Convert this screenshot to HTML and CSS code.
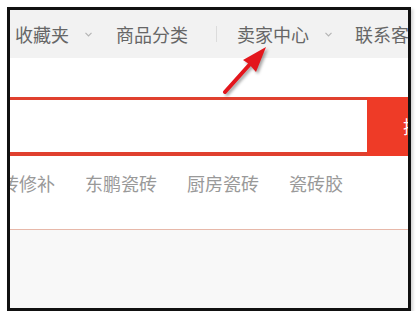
FILE: index.html
```html
<!DOCTYPE html>
<html lang="zh-CN">
<head>
  <meta charset="UTF-8" />
  <meta name="viewport" content="width=device-width, initial-scale=1.0" />
  <title>卖家中心</title>
  <link rel="stylesheet" href="styles.css">
</head>
<body>
  <div class="frame">
    <nav class="nav">
      <span class="nav-item">收藏夹</span>
      <svg class="chev" width="7" height="5" viewBox="0 0 7 5"><polyline points="0.5,0.8 3.5,3.8 6.5,0.8" fill="none" stroke="#b5b5b5" stroke-width="1.2"/></svg>
      <span class="nav-item item-cat">商品分类</span>
      <span class="sep"></span>
      <span class="nav-item item-seller">卖家中心</span>
      <svg class="chev" width="7" height="5" viewBox="0 0 7 5"><polyline points="0.5,0.8 3.5,3.8 6.5,0.8" fill="none" stroke="#b5b5b5" stroke-width="1.2"/></svg>
      <span class="nav-item item-contact">联系客服</span>
    </nav>

    <section class="search">
      <div class="search-input"></div>
      <div class="search-btn">搜索</div>
    </section>

    <div class="tags">
      <span>瓷砖修补</span>
      <span>东鹏瓷砖</span>
      <span>厨房瓷砖</span>
      <span>瓷砖胶</span>
    </div>

    <div class="content"></div>
  </div>

  <!-- annotation arrow drawn over the screenshot -->
  <svg class="arrow" width="418" height="318" viewBox="0 0 418 318">
    <line x1="225" y1="92" x2="251" y2="63" stroke="#e3161c" stroke-width="4" stroke-linecap="round"/>
    <polygon points="266,47 256,72 249,64 243,60" fill="#e3161c"/>
  </svg>
</body>
</html>
```

FILE: styles.css
```css
body {
  margin: 0;
  background: #fff;
  font-family: "Noto Sans CJK SC", "Noto Sans", sans-serif;
}
.frame {
  margin: 7px 0 0 7px;
  width: 404px;
  height: 304px;
  box-sizing: border-box;
  border: 3px solid #111;
  overflow: hidden;
  background: #fff;
  display: flex;
  flex-direction: column;
  box-shadow: 2px 2px 3px rgba(0, 0, 0, 0.18);
}
.nav {
  height: 48px;
  flex-shrink: 0;
  background: #f2f2f2;
  display: flex;
  align-items: center;
  padding-left: 5px;
  white-space: nowrap;
  font-size: 18px;
  color: #666;
}
.nav-item {
  line-height: 24px;
  flex-shrink: 0;
}
.chev {
  margin-left: 16px;
  flex-shrink: 0;
}
.item-cat {
  margin-left: 24px;
}
.sep {
  margin-left: 28px;
  width: 1px;
  height: 16px;
  background: #dcdcdc;
  flex-shrink: 0;
}
.item-seller {
  margin-left: 20px;
}
.item-contact {
  margin-left: 23px;
}
.search {
  margin-top: 39px;
  height: 59px;
  display: flex;
  flex-shrink: 0;
}
.search-input {
  width: 357px;
  flex-shrink: 0;
  box-sizing: border-box;
  border-top: 3px solid #e0402e;
  border-bottom: 4px solid #e0402e;
  background: #fff;
}
.search-btn {
  width: 80px;
  flex-shrink: 0;
  background: #ee3b27;
  color: #fff;
  font-size: 18px;
  line-height: 59px;
  padding-left: 36px;
  white-space: nowrap;
}
.tags {
  height: 74px;
  flex-shrink: 0;
  box-sizing: border-box;
  padding-top: 14px;
  margin-left: -27px;
  display: flex;
  gap: 30px;
  font-size: 18px;
  line-height: 26px;
  color: #999;
  white-space: nowrap;
  border-bottom: 1px solid #e7b8a9;
  width: 431px;
}
.content {
  flex: 1;
  background: #f8f8f8;
}
.arrow {
  position: absolute;
  left: 0;
  top: 0;
  pointer-events: none;
  filter: drop-shadow(2px 2px 1.5px rgba(0, 0, 0, 0.35));
}
```
